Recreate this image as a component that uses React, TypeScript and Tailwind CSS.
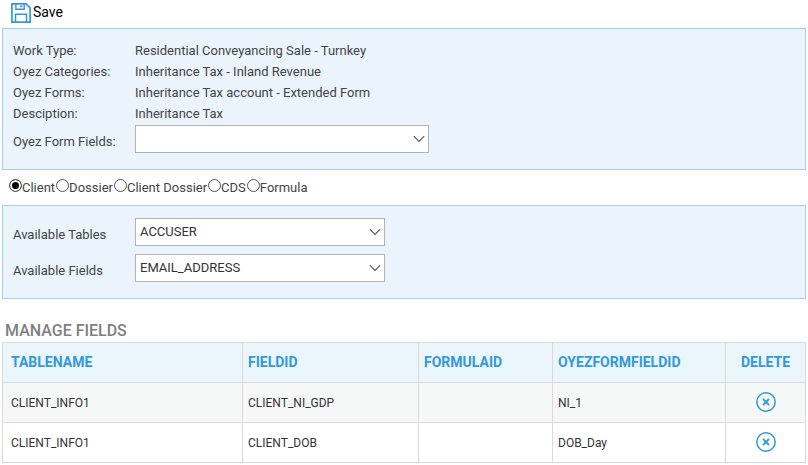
import React, { useState } from "react";

const details = [
  { label: "Work Type:", value: "Residential Conveyancing Sale - Turnkey" },
  { label: "Oyez Categories:", value: "Inheritance Tax - Inland Revenue" },
  { label: "Oyez Forms:", value: "Inheritance Tax account - Extended Form" },
  { label: "Desciption:", value: "Inheritance Tax" },
];

const sources = ["Client", "Dossier", "Client Dossier", "CDS", "Formula"];

const initialRows = [
  { table: "CLIENT_INFO1", field: "CLIENT_NI_GDP", formula: "", form: "NI_1" },
  { table: "CLIENT_INFO1", field: "CLIENT_DOB", formula: "", form: "DOB_Day" },
];

const SaveIcon: React.FC = () => (
  <svg width="20" height="20" viewBox="0 0 20 20" fill="none" stroke="#3498db">
    <path d="M0.9 0.9H15.2L19.1 4.8V19.1H0.9Z" strokeWidth="1.7" />
    <path d="M4.9 1V6.3H13.2V1" strokeWidth="1.4" />
    <path d="M9 3.4H11.6" strokeWidth="1.6" />
    <path d="M4.5 19V11.3H15.5V19" strokeWidth="1.5" />
  </svg>
);

const DeleteIcon: React.FC = () => (
  <svg width="20" height="20" viewBox="0 0 20 20" fill="none" stroke="#3498db">
    <circle cx="10" cy="10" r="9.2" strokeWidth="1.5" />
    <path d="M7 7L13 13M13 7L7 13" strokeWidth="1.8" />
  </svg>
);

type SelectFieldProps = {
  id: string;
  label: string;
  options: string[];
  width: string;
};

const SelectField: React.FC<SelectFieldProps> = ({
  id,
  label,
  options,
  width,
}) => (
  <div className="flex items-center">
    <label htmlFor={id} className="w-[122px] shrink-0 pt-1">
      {label}
    </label>
    <div className={`grid items-center ${width}`}>
      <select
        id={id}
        className="col-start-1 row-start-1 h-7 w-full appearance-none border border-[#b2b2b2] bg-white pr-6 pb-px pl-1 text-[13px] text-[#333]"
      >
        {options.map((option) => (
          <option key={option}>{option}</option>
        ))}
      </select>
      <svg
        className="pointer-events-none col-start-1 row-start-1 mr-1 justify-self-end"
        width="12"
        height="8"
        viewBox="0 0 12 8"
        fill="none"
        stroke="#555"
      >
        <path d="M0.8 1.2L6 6.4L11.2 1.2" strokeWidth="1.1" />
      </svg>
    </div>
  </div>
);

const App: React.FC = () => {
  const [source, setSource] = useState("Client");
  const [rows, setRows] = useState(initialRows);

  const headCell = "border border-[#dadada] pb-0.5 pl-[5px] text-left font-bold";
  const cell = "border border-[#dadada] pl-[5px]";

  return (
    <div className="bg-white px-0.5 font-['Roboto',sans-serif] text-[13px] leading-[21px] text-[#444]">
      <div className="flex h-7 items-start pt-0.5 pl-[9px]">
        <button className="flex items-center gap-0.5 text-sm leading-5 text-black">
          <SaveIcon />
          <span className="pb-0.5">Save</span>
        </button>
      </div>

      <section className="border border-[#a3d0ef] bg-[#ebf4fc] px-2.5 pt-[11px] pb-4">
        <dl className="pb-px">
          {details.map((item) => (
            <div key={item.label} className="flex">
              <dt className="w-[122px] shrink-0">{item.label}</dt>
              <dd>{item.value}</dd>
            </div>
          ))}
        </dl>
        <SelectField
          id="form-fields"
          label="Oyez Form Fields:"
          options={[""]}
          width="w-[294px]"
        />
      </section>

      <div className="flex h-[35px] items-center gap-px pl-[7px]">
        {sources.map((name) => (
          <label key={name} className="flex items-center">
            <input
              type="radio"
              name="source"
              value={name}
              checked={source === name}
              onChange={() => setSource(name)}
              className="mb-1 size-[13px] appearance-none rounded-full border border-[#555] bg-white checked:bg-black checked:shadow-[inset_0_0_0_2px_white]"
            />
            {name}
          </label>
        ))}
      </div>

      <section className="flex flex-col gap-2 border border-[#a3d0ef] bg-[#ebf4fc] px-2.5 pt-3 pb-4">
        <SelectField
          id="tables"
          label="Available Tables"
          options={["ACCUSER"]}
          width="w-[250px]"
        />
        <SelectField
          id="fields"
          label="Available Fields"
          options={["EMAIL_ADDRESS"]}
          width="w-[250px]"
        />
      </section>

      <h2 className="pt-5 pl-[3px] text-base leading-[23px] font-medium text-[#7f7f7f]">
        MANAGE FIELDS
      </h2>
      <table className="w-full table-fixed border-collapse">
        <colgroup>
          <col className="w-[240px]" />
          <col className="w-[176px]" />
          <col className="w-[134px]" />
          <col />
          <col className="w-[80px]" />
        </colgroup>
        <thead>
          <tr className="h-10 bg-[#eaf5fc] text-sm text-[#3498db]">
            <th className="border border-[#dadada] pb-0.5 pl-2 text-left font-bold">
              TABLENAME
            </th>
            <th className={headCell}>FIELDID</th>
            <th className={headCell}>FORMULAID</th>
            <th className={headCell}>OYEZFORMFIELDID</th>
            <th className="border border-[#dadada] pb-0.5 text-center font-bold">
              DELETE
            </th>
          </tr>
        </thead>
        <tbody>
          {rows.map((row) => (
            <tr
              key={row.field}
              className="h-10 text-xs text-[#333] odd:bg-[#f6f8f7]"
            >
              <td className="border border-[#dadada] pl-2">{row.table}</td>
              <td className={cell}>{row.field}</td>
              <td className={cell}>{row.formula}</td>
              <td className={cell}>{row.form}</td>
              <td className="border border-[#dadada] pb-0.5">
                <button
                  aria-label={`Delete ${row.field}`}
                  className="mx-auto block"
                  onClick={() => setRows(rows.filter((r) => r !== row))}
                >
                  <DeleteIcon />
                </button>
              </td>
            </tr>
          ))}
        </tbody>
      </table>
    </div>
  );
};

export default App;
